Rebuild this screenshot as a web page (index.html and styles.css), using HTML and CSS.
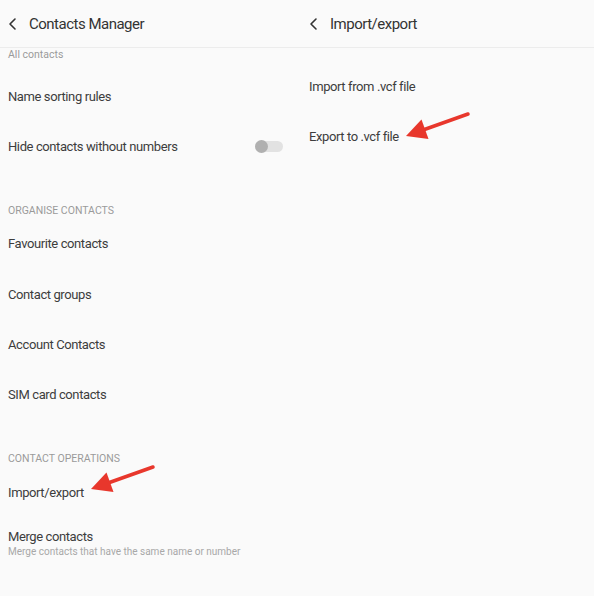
FILE: index.html
```html
<!DOCTYPE html>
<html lang="en">
<head>
    <meta charset="UTF-8">
    <meta name="viewport" content="width=device-width, initial-scale=1.0">
    <title>Contacts Manager</title>
    <link rel="stylesheet" href="styles.css">
</head>
<body>

    <div class="frame">

        <!-- Left screen: Contacts Manager -->
        <div class="panel panel-left">
            <div class="header">
                <svg class="back" width="10" height="14" viewBox="0 0 10 14"><polyline points="7,2 2,7 7,12" /></svg>
                <span class="header-title">Contacts Manager</span>
            </div>

            <div class="list">
                <div class="section first">All contacts</div>
                <div class="item">Name sorting rules</div>
                <div class="item">
                    <span>Hide contacts without numbers</span>
                    <span class="toggle"><span class="knob"></span></span>
                </div>

                <div class="section">ORGANISE CONTACTS</div>
                <div class="item">Favourite contacts</div>
                <div class="item item-step">Contact groups</div>
                <div class="item">Account Contacts</div>
                <div class="item">SIM card contacts</div>

                <div class="section">CONTACT OPERATIONS</div>
                <div class="item item-low">Import/export</div>
                <div class="item item-two">
                    <div class="item-title">Merge contacts</div>
                    <div class="item-sub">Merge contacts that have the same name or number</div>
                </div>
            </div>
        </div>

        <!-- Right screen: Import/export -->
        <div class="panel panel-right">
            <div class="header">
                <svg class="back" width="10" height="14" viewBox="0 0 10 14"><polyline points="7,2 2,7 7,12" /></svg>
                <span class="header-title">Import/export</span>
            </div>

            <div class="list list-right">
                <div class="item">Import from .vcf file</div>
                <div class="item">Export to .vcf file</div>
            </div>
        </div>

        <!-- Red arrows drawn on top of the screenshot -->
        <svg class="arrows" width="594" height="596" viewBox="0 0 594 596">
            <line x1="468" y1="114" x2="423" y2="130" />
            <polygon points="406,136 428.5,139 421.5,119.5" />
            <line x1="153" y1="467" x2="108" y2="483" />
            <polygon points="91,489 113.5,492 106.5,472.5" />
        </svg>
    </div>

</body>
</html>
```

FILE: styles.css
```css
/* General Styles */
body {
    margin: 0;
    padding: 0;
    background: #ffffff;
    font-family: Roboto, "Noto Sans", Arial, sans-serif;
    color: #3a3a3a;
}

.frame {
    position: relative;
    width: 594px;
    height: 596px;
    background: #fafafa;
    display: grid;
    grid-template-columns: 301px 1fr;
    overflow: hidden;
}

/* Header */
.header {
    height: 48px;
    box-sizing: border-box;
    border-bottom: 1px solid #ececec;
    display: flex;
    align-items: center;
    padding-left: 8px;
    padding-top: 1px;
}

.back {
    fill: none;
    stroke: #333;
    stroke-width: 1.6;
    stroke-linecap: round;
    stroke-linejoin: round;
    margin-right: 11px;
}

.header-title {
    font-size: 15px;
    color: #333;
    letter-spacing: -0.5px;
}

/* Lists */
.list {
    padding-left: 8px;
}

.list-right {
    padding-top: 13px;
}

.item {
    height: 50px;
    display: flex;
    align-items: center;
    justify-content: space-between;
    font-size: 13px;
    letter-spacing: -0.4px;
    color: #3d3d3d;
    padding-right: 18px;
}

.item-step {
    padding-top: 1px;
}

.item-low {
    padding-top: 3px;
    height: 47px;
}

.item-two {
    flex-direction: column;
    align-items: flex-start;
    justify-content: center;
    height: 50px;
    padding-top: 3px;
    letter-spacing: 0;
}

.item-title {
    font-size: 13px;
    line-height: 16px;
    letter-spacing: -0.4px;
}

.item-sub {
    font-size: 10px;
    color: #a8a8a8;
    line-height: 14px;
}

.section {
    font-size: 10.5px;
    color: #9a9a9a;
    line-height: 14px;
    padding-top: 33px;
    height: 14px;
}

.section.first {
    padding-top: 0;
    height: 23px;
}

/* Toggle */
.toggle {
    width: 28px;
    height: 11px;
    border-radius: 6px;
    background: #e2e2e2;
    position: relative;
}

.knob {
    position: absolute;
    left: 0;
    top: -1px;
    width: 13px;
    height: 13px;
    border-radius: 50%;
    background: #b0b0b0;
}

/* Arrows */
.arrows {
    position: absolute;
    left: 0;
    top: 0;
    pointer-events: none;
}

.arrows line {
    stroke: #e8372c;
    stroke-width: 3.5;
    stroke-linecap: round;
}

.arrows polygon {
    fill: #e8372c;
}
```
